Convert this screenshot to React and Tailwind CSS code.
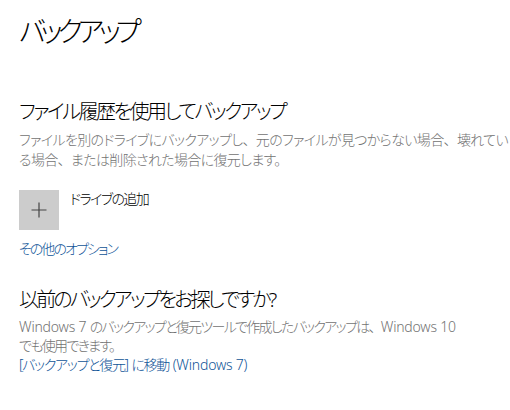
import React from "react";

const font = {
  fontFamily: '"Noto Sans", "Noto Sans CJK JP", sans-serif',
};

function J({ children }) {
  const parts = String(children).split("、");
  return parts.map((p, i) => (
    <React.Fragment key={i}>
      {p}
      {i < parts.length - 1 && <span className="[font-feature-settings:normal]">、</span>}
    </React.Fragment>
  ));
}

export default function App() {
  return (
    <div
      className="w-[510px] h-[410px] bg-white pl-[19px] pr-[10px] pt-[11px] text-black [font-feature-settings:'palt'] overflow-hidden"
      style={font}
    >
      <h1 className="text-[28px] font-light leading-[40px] tracking-[-5px]">バックアップ</h1>

      <h2 className="mt-[47px] text-[20px] font-light leading-[28px] tracking-[-2.45px]">ファイル履歴を使用してバックアップ</h2>
      <p className="mt-[4px] text-[14px] font-light leading-[20px] tracking-[-0.65px] text-[#727272] whitespace-nowrap">
        <J>ファイルを別のドライブにバックアップし、元のファイルが見つからない場合、壊れてい</J>
        <br />
        <J>る場合、または削除された場合に復元します。</J>
      </p>

      <div className="mt-[20px] flex items-start gap-[11px]">
        <div className="w-[40px] h-[40px] bg-[#cccccc] flex items-center justify-center">
          <svg width="16" height="16" viewBox="0 0 16 16">
            <path d="M8 0.5V15.5M0.5 8H15.5" stroke="#444444" strokeWidth="1.2" fill="none" />
          </svg>
        </div>
        <div className="text-[14px] font-light leading-[20px] tracking-[-1.6px] -mt-[1px]">ドライブの追加</div>
      </div>

      <div className="mt-[9px] text-[14px] font-light leading-[20px] tracking-[-1.9px] text-[#0f5497]">その他のオプション</div>

      <h2 className="mt-[27px] text-[20px] font-light leading-[28px] tracking-[-2.8px]">以前のバックアップをお探しですか?</h2>
      <p className="mt-[3px] text-[14px] font-light leading-[19px] tracking-[-1.7px] text-[#727272] whitespace-nowrap">
        <span className="tracking-[-0.2px]">Windows 7 </span>
        <J>のバックアップと復元ツールで作成したバックアップは、</J>
        <span className="tracking-[-0.2px]">Windows 10</span>
        <br />
        でも使用できます。
      </p>
      <div className="text-[14px] font-light leading-[19px] tracking-[-1.3px] text-[#0f5497] whitespace-nowrap">
        [バックアップと復元]<span className="tracking-normal"> </span>に移動<span className="tracking-normal"> </span><span className="tracking-[-0.2px]">(Windows 7)</span>
      </div>
    </div>
  );
}
